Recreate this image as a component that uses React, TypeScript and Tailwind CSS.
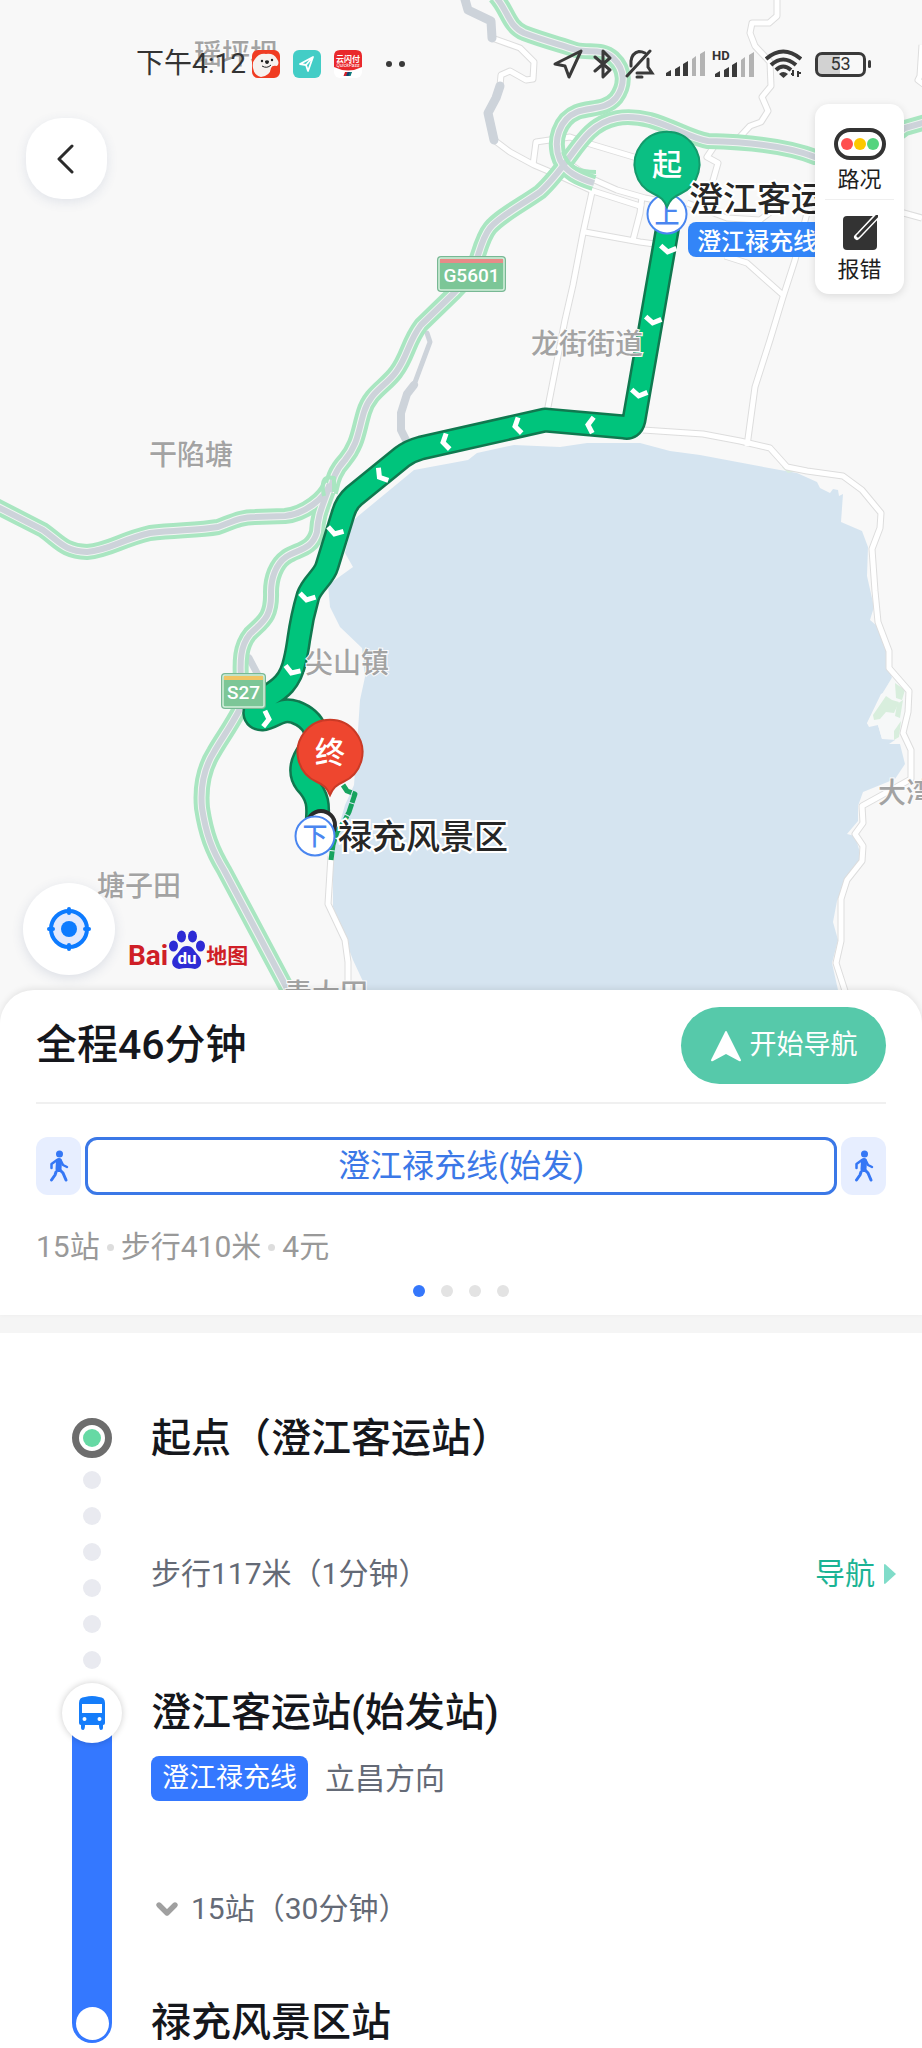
import { ChevronDown } from 'lucide-react';
import { useState } from 'react';

const highways = [
  'M495 -4 C508 10 508 26 524 33 C545 41 562 45 576 50 C590 53 602 48 613 58 C626 70 625 86 616 98 C606 110 590 107 577 112 C560 119 552 140 560 160 C566 172 578 178 594 183',
  'M940 118 L905 128 C880 148 860 154 815 157 C790 147 750 142 708 141 C690 138 672 126 650 120 C625 114 606 117 590 132 C575 146 562 172 540 192 C520 206 500 216 490 228 C480 240 478 262 470 276 L454 293 L421 325 C408 342 408 356 396 372 C386 386 370 392 364 412 C358 432 358 444 345 460 C332 474 332 486 330 492',
  'M-4 506 L43 530 C60 542 64 551 87 552 C110 550 120 540 150 533 C180 530 200 530 218 527 C232 522 240 517 255 517 L285 516 C305 514 325 498 330 484',
  'M330 484 C324 504 318 512 317 532 C312 550 298 549 286 557 C276 564 271 578 271 592 C272 618 262 622 250 634 C240 646 240 662 241 680 L241 707 C230 728 222 738 214 752 C204 768 200 786 202 808 C206 834 212 850 224 870 L290 994 L308 1028',
];

const ramps = [
  'M563 152 C568 168 580 172 596 172',
  'M324 496 C320 478 326 476 334 478 L334 492',
];

const greyRoads = [
  { d: 'M464 -4 L468 10 L491 21 L492 38', width: 9 },
  { d: 'M500 86 L496 98 L488 113 L494 140', width: 9 },
  { d: 'M427 333 L430 342 L414 385', width: 5 },
  { d: 'M414 385 L407 394 L401 413 L401 430 L408 444', width: 8 },
  { d: 'M249 658 L258 675', width: 7 },
];

const roads = [
  'M492 38 L520 48 L534 62 L533 79 L526 80 L510 71 L501 75 L500 86',
  'M494 140 L510 152 L534 165 L560 176 L593 191 L643 207',
  'M533 165 L536 142 L570 137 L587 143 L637 158',
  'M560 157 L590 178 L617 190 L645 198 L680 205',
  'M592 192 L583 233 L573 285 L565 320 L547 412',
  'M585 232 L640 242 L662 245',
  'M642 197 L640 213 L633 240',
  'M777 -4 L777 16 L769 23 L752 23 L750 33 L755 46 L770 62 L771 86 L762 97 L768 111 L761 122 L750 126 L737 140 L717 142 L707 157 L718 163 L712 184',
  'M687 203 L727 218 L760 220 L777 207',
  'M725 256 L747 263 L783 295',
  'M807 213 L795 260 L783 297 L770 340 L755 387 L747 446',
  'M900 212 L922 218',
  'M922 45 L920 76 L918 80 L926 86',
  'M643 430 L703 434 L740 441 L770 448 L787 467 L807 471 L843 476 L862 490 L881 513 L880 528 L872 549 L875 591 L878 622 L889 651 L889 668 L909 691 L908 712 L903 733 L911 750 L911 779 L862 806 L863 823 L855 834 L863 846 L862 861 L847 880 L841 899 L841 941 L836 963 L846 994 L852 1028',
  'M331 856 L328 904 L345 940 L348 962 L348 1028',
];

const lake =
  'M357 517 L414 470 L468 460 L477 453 L514 445 L560 447 L587 443 L640 443 L670 451 L700 455 L780 470 L797 473 L817 482 L820 488 L830 493 L833 489 L838 490 L839 496 L843 494 L841 522 L862 531 L868 547 L867 576 L874 607 L870 620 L877 626 L888 651 L892 679 L888 691 L881 694 L867 723 L869 727 L878 725 L882 739 L888 739 L892 731 L895 740 L889 744 L900 744 L905 764 L895 779 L863 792 L858 806 L858 821 L847 834 L855 836 L862 859 L847 878 L837 901 L833 922 L838 940 L832 963 L838 990 L844 1028 L384 1028 L367 990 L353 960 L333 907 L333 860 L335 840 L345 805 L354 785 L358 730 L360 700 L365 677 L362 648 L340 627 L330 607 L328 585 L353 567 L345 553 L352 523 Z';

const route =
  'M670 214 L634 420 Q632 429 624 427 L545 420 L421 448 Q410 451 402 457 L354 496 Q346 503 343 514 L327 566 C324 577 312 584 308 596 C298 630 300 640 295 660 C290 684 278 690 264 699 C250 710 254 719 262 719 C274 718 280 707 295 712 C316 720 322 738 310 750 C302 760 298 772 306 783 C322 800 317 812 317 827';

const arrows = [
  [668, 250, 10],
  [653, 321, 10],
  [639, 394, 10],
  [590, 425, 95],
  [517, 426, 77],
  [445, 442, 77],
  [381, 476, 52],
  [335, 532, 16],
  [307, 598, 14],
  [292, 671, 20],
  [267, 719, -84],
];

const places = [
  { name: '瑶坪坝', x: 194, y: 64 },
  { name: '龙街街道', x: 531, y: 354 },
  { name: '干陷塘', x: 149, y: 465 },
  { name: '尖山镇', x: 305, y: 673 },
  { name: '塘子田', x: 97, y: 896 },
  { name: '大湾', x: 878, y: 803 },
  { name: '青大田', x: 284, y: 1004 },
];

function Shield({ x, y, width, label, stripe }: { x: number; y: number; width: number; label: string; stripe: string }) {
  return (
    <g>
      <rect x={x} y={y} width={width} height={36} rx={4} fill="#78b894" />
      <rect x={x + 2} y={y + 2} width={width - 4} height={32} rx={2} fill="#7cc697" stroke="#d3efdc" strokeWidth={1.5} />
      <rect x={x + 3} y={y + 3} width={width - 6} height={4} fill={stripe} />
      <text x={x + width / 2} y={y + 26} textAnchor="middle" fontSize={19} fontWeight={500} fill="#fff">
        {label}
      </text>
    </g>
  );
}

function Pin({ x, y, label, fill, stroke }: { x: number; y: number; label: string; fill: string; stroke: string }) {
  return (
    <g transform={`translate(${x} ${y})`}>
      <path
        d="M0 43 C-3 36 -6 33 -13 30 A32.5 32.5 0 1 1 13 30 C6 33 3 36 0 43 Z"
        fill={fill}
        stroke={stroke}
        strokeWidth={2}
      />
      <text y={11} textAnchor="middle" fontSize={30} fontWeight={500} fill="#fff">
        {label}
      </text>
    </g>
  );
}

function StopBadge({ x, y, label }: { x: number; y: number; label: string }) {
  return (
    <g>
      <circle cx={x} cy={y} r={19.5} fill="#fff" stroke="#4a86f0" strokeWidth={2} />
      <text x={x} y={y + 9} textAnchor="middle" fontSize={25} fontWeight={500} fill="#4a86f0">
        {label}
      </text>
    </g>
  );
}

function RouteMap() {
  return (
    <svg
      viewBox="0 0 922 1024"
      preserveAspectRatio="xMidYMin slice"
      className="block h-[1024px] w-full bg-[#f8f8f8]"
      role="img"
      aria-label="路线地图"
    >
      <path d={lake} fill="#d5e4f0" />
      <path d="M867 724 L882 694 L893 676 L908 691 L904 720 L896 740 L882 739 L878 725 Z" fill="#f6f8f8" />
      <g fill="#d8eedd">
        <path d="M895 683 L905 690 L902 700 L896 698 Z" />
        <path d="M873 715 L886 696 L892 700 L899 702 L894 713 L886 712 L880 719 L874 720 Z" />
        <path d="M897 704 L903 700 L900 718 L895 716 Z" />
        <path d="M894 731 L901 721 L899 737 L894 740 Z" />
        <path d="M782 467 L797 471 L788 473 Z" />
      </g>

      <g fill="none" strokeLinejoin="round">
        {roads.map((d) => (
          <path key={d} d={d} stroke="#dddddd" strokeWidth={7} />
        ))}
        {roads.map((d) => (
          <path key={d} d={d} stroke="#ffffff" strokeWidth={5} />
        ))}
        {greyRoads.map((road) => (
          <path key={road.d} d={road.d} stroke="#cdd3da" strokeWidth={road.width} strokeLinecap="round" />
        ))}
        {highways.map((d) => (
          <path key={d} d={d} stroke="#a9e6c1" strokeWidth={16} />
        ))}
        {highways.map((d) => (
          <path key={d} d={d} stroke="#f1f5f3" strokeWidth={8} />
        ))}
        {highways.map((d) => (
          <path key={d} d={d} stroke="#cdd3da" strokeWidth={6} />
        ))}
        {ramps.map((d) => (
          <path key={d} d={d} stroke="#a9e6c1" strokeWidth={4} />
        ))}
      </g>

      <Shield x={437} y={256} width={69} label="G5601" stripe="#e88b88" />

      <g fill="none" strokeLinejoin="round">
        <path d={route} stroke="#10784f" strokeWidth={25} />
        <path d={route} stroke="#00c47c" strokeWidth={20} />
        {arrows.map(([x, y, angle]) => (
          <path
            key={`${x}-${y}`}
            d="M-8 -3 L0 2 L8 -3"
            transform={`translate(${x} ${y}) rotate(${angle})`}
            stroke="#fff"
            strokeWidth={5}
            strokeLinejoin="miter"
          />
        ))}
        <path
          d="M343 785 L347 791 L355 794 L349 812 L345 820 L337 832 L333 845 L331 860"
          stroke="#17a35e"
          strokeWidth={5}
          strokeDasharray="12 1"
        />
      </g>

      <g fontSize={28} fill="#a3a3a3" stroke="#fbfbfb" strokeWidth={2} paintOrder="stroke" fontWeight={500}>
        {places.map((place) => (
          <text key={place.name} x={place.x} y={place.y}>
            {place.name}
          </text>
        ))}
      </g>

      <Shield x={221} y={673} width={45} label="S27" stripe="#f0c565" />

      <circle cx={321} cy={825} r={14} fill="#fff" stroke="#2b2b2b" strokeWidth={4} />
      <StopBadge x={315} y={836} label="下" />
      <StopBadge x={667} y={214} label="上" />
      <Pin x={667} y={164} label="起" fill="#0bbf83" stroke="#149a6b" />
      <Pin x={330} y={752} label="终" fill="#ee462f" stroke="#c93a26" />

      <g fontSize={34} fontWeight={500} fill="#262626" stroke="#ffffff" strokeWidth={4} paintOrder="stroke">
        <text x={689} y={211}>澄江客运站</text>
        <text x={338} y={849}>禄充风景区</text>
      </g>
      <rect x={688} y={222} width={150} height={35} rx={8} fill="#3385f8" />
      <text x={697} y={250} fontSize={24} fontWeight={500} fill="#fff">
        澄江禄充线
      </text>
    </svg>
  );
}

function Signal() {
  return (
    <svg viewBox="0 0 39 26" className="h-[26px] w-[39px]" aria-hidden="true">
      <path d="M0 25 V22 L5 19 V25 Z M9 25 V18 L14 15 V25 Z M17 25 V13 L22 10 V25 Z" fill="#3a3a3a" />
      <path d="M26 25 V8 L30 5 V25 Z M34 25 V3 L39 0 V25 Z" fill="#b3b3b3" />
    </svg>
  );
}

function StatusBar() {
  return (
    <div className="absolute inset-x-0 top-0 flex h-[128px] items-center justify-between pr-[51px] pl-[136px] text-[#333]">
      <div className="flex items-center gap-[14px]">
        <span className="text-[28px] leading-8">下午4:12</span>
        <div className="-ml-2 flex items-center gap-[13px]">
          <svg viewBox="0 0 28 28" className="h-7 w-7" aria-hidden="true">
            <rect width="28" height="28" rx="6" fill="#f03c22" />
            <path d="M3 9 Q7 3 14 4 Q22 3 25 9 Q28 13 25 16 Q20 15 19 18 Q18 26 9 27 Q2 25 1 18 Q0 12 3 9 Z" fill="#f6f1ee" />
            <path d="M13 11 q2 -1.500 4 0 q0 3 -2 3 q-2 0 -2 -3" fill="#222" />
            <circle cx="10" cy="11" r="1.200" fill="#222" />
            <circle cx="20" cy="10" r="1.200" fill="#222" />
            <path d="M10 16 Q15 19 19 15" fill="none" stroke="#222" />
          </svg>
          <svg viewBox="0 0 28 28" className="h-7 w-7" aria-hidden="true">
            <rect width="28" height="28" rx="6" fill="#43cdc6" />
            <path d="M7 14 L20 7 L15 21 L13 15 Z M13 15 L20 7" fill="none" stroke="#fff" strokeWidth="1.800" strokeLinejoin="round" />
          </svg>
          <svg viewBox="0 0 28 28" className="h-7 w-7" aria-hidden="true">
            <rect width="28" height="28" rx="6" fill="#fff" />
            <path d="M6 0 H22 Q28 0 28 6 V17 Q14 24 0 17 V6 Q0 0 6 0" fill="#e9292c" />
            <text x="14" y="12" textAnchor="middle" fontSize="8" fontWeight="700" fill="#fff">云闪付</text>
            <text x="14" y="17" textAnchor="middle" fontSize="5" fontStyle="italic" fill="#fff">QuickPass</text>
            <path d="M11 22 h3 l-1.500 4 h-3 Z" fill="#d3222a" />
            <path d="M13.500 22 h4 l-1.500 4 h-4 Z" fill="#14406e" />
            <path d="M16 22 h2 l-1.500 4 h-2 Z" fill="#0f7c7c" />
          </svg>
        </div>
        <div className="ml-[10px] flex gap-[7px]">
          <span className="h-[6px] w-[6px] rounded-full bg-[#3a3a3a]" />
          <span className="h-[6px] w-[6px] rounded-full bg-[#3a3a3a]" />
        </div>
      </div>

      <div className="flex items-center">
        <svg viewBox="0 0 30 30" className="h-[30px] w-[30px]" fill="none" stroke="#3a3a3a" strokeWidth="3" strokeLinejoin="round" aria-hidden="true">
          <path d="M2 15 L28 2 L16 28 L12 17 Z" />
        </svg>
        <svg viewBox="0 0 20 30" className="ml-[10px] h-[30px] w-5" fill="none" stroke="#3a3a3a" strokeWidth="3" strokeLinejoin="round" strokeLinecap="round" aria-hidden="true">
          <path d="M2 8 L17 21 L10 28 V2 L17 9 L2 22" />
        </svg>
        <svg viewBox="0 0 30 30" className="ml-3 h-[30px] w-[30px]" fill="none" stroke="#3a3a3a" strokeWidth="3" strokeLinecap="round" aria-hidden="true">
          <path d="M2 27 L25 2" />
          <path d="M6 17 V12 Q7 4 14 2.500 Q17 2.500 20 4" />
          <path d="M23 10 V18 L27 24 H12" />
          <path d="M12 28 H17" />
        </svg>
        <div className="ml-[11px] flex items-center">
          <Signal />
        </div>
        <div className="ml-[10px] flex flex-col items-start">
          <span className="-ml-[3px] -mb-[9px] h-[11px] text-[13px] leading-[11px] font-bold">HD</span>
          <Signal />
        </div>
        <svg viewBox="0 0 37 30" className="ml-[11px] h-[30px] w-[37px]" fill="none" stroke="#3a3a3a" strokeWidth="4" aria-hidden="true">
          <path d="M1 10 Q18 -5 36 10" />
          <path d="M6 16 Q18 5 31 16" />
          <path d="M11 21 Q18 14 26 21" />
          <path d="M14 25 Q18 21 23 25 L18.500 29 Z" fill="#3a3a3a" stroke="none" />
          <path d="M28 21 V27 M33 22 V28" strokeWidth="2" />
          <path d="M26 25 H29 M32 24 H36" strokeWidth="2" />
        </svg>
        <div className="ml-[13px] flex items-center gap-[2px]">
          <div className="flex h-[25px] w-[51px] items-center justify-center rounded-[7px] border-[3px] border-[#3a3a3a] bg-linear-to-r from-[#d2d2d2] from-50% to-[#f8f8f8] to-50% text-[18px] leading-5">
            53
          </div>
          <span className="h-2 w-[3px] rounded-sm bg-[#3a3a3a]" />
        </div>
      </div>
    </div>
  );
}

function BaiduLogo() {
  return (
    <div className="absolute bottom-[54px] left-[128px] flex items-end font-bold text-[#cf1f27]">
      <span className="text-[28px] leading-7">Bai</span>
      <svg viewBox="0 0 38 40" className="h-10 w-[38px]" aria-hidden="true">
        <g fill="#2d2bd5">
          <ellipse cx="5.500" cy="16" rx="4.500" ry="5.500" />
          <ellipse cx="13.500" cy="6.500" rx="4.500" ry="6" />
          <ellipse cx="24.500" cy="6.500" rx="4.500" ry="6" />
          <ellipse cx="32.500" cy="16" rx="4.500" ry="5.500" />
          <path d="M19 16 C25 16 26 21 30 25 C35 30 34 38 27 39 Q19 37 11 39 C3 38 2 30 8 25 C12 21 13 16 19 16 Z" />
        </g>
        <text x="19" y="34" textAnchor="middle" fontSize="17" fontWeight="700" fill="#fff">du</text>
      </svg>
      <span className="text-[21px] leading-7">地图</span>
    </div>
  );
}

function MapTools() {
  return (
    <div className="absolute top-[104px] right-[18px] flex h-[190px] w-[89px] flex-col items-center rounded-[14px] bg-white text-[22px] text-[#1e1e1e] shadow-[0_2px_8px_rgba(0,0,0,0.12)]">
      <button type="button" className="flex w-full flex-col items-center pt-6">
        <svg viewBox="0 0 52 32" className="h-8 w-[52px]" aria-hidden="true">
          <rect x="2" y="2" width="48" height="28" rx="14" fill="#fff" stroke="#333" strokeWidth="4" />
          <circle cx="13" cy="16" r="6" fill="#ff4f4f" />
          <circle cx="26" cy="16" r="6" fill="#fdc800" />
          <circle cx="39" cy="16" r="6" fill="#55d47f" />
        </svg>
        <span className="mt-1 leading-8">路况</span>
      </button>
      <span className="mt-[3px] h-px w-[69px] bg-[#efefef]" />
      <button type="button" className="flex w-full flex-col items-center pt-[15px]">
        <svg viewBox="0 0 36 36" className="h-9 w-9" aria-hidden="true">
          <rect x="1" y="1" width="34" height="34" rx="4" fill="#333" />
          <path d="M34 2 L18 19 L15 22" fill="none" stroke="#fff" strokeWidth="6" strokeLinecap="round" />
          <path d="M36 0 L18 19 L16 21" fill="none" stroke="#333" strokeWidth="3" strokeLinecap="round" />
        </svg>
        <span className="mt-[3px] leading-8">报错</span>
      </button>
    </div>
  );
}

function WalkTile() {
  return (
    <span className="flex w-[45px] shrink-0 items-center justify-center rounded-[12px] bg-[#e7eeff]">
      <svg viewBox="0 0 20 32" className="h-8 w-5" fill="none" stroke="#3577f5" strokeLinecap="round" strokeLinejoin="round" aria-label="步行">
        <circle cx="10.500" cy="4" r="3.500" fill="#3577f5" stroke="none" />
        <path d="M10 11 L9.500 19" strokeWidth="6" />
        <path d="M8 10 L2.500 14 V18" strokeWidth="2.500" />
        <path d="M12 11 L14 15 L18 17" strokeWidth="2.500" />
        <path d="M10 19 L14 23 L17 30" strokeWidth="3" />
        <path d="M7 22 L6 25 L2.500 30" strokeWidth="3" />
      </svg>
    </span>
  );
}

function Summary() {
  const [page, setPage] = useState(0);

  return (
    <section className="relative -mt-[34px] rounded-t-[34px] bg-white px-9 shadow-[0_-2px_6px_rgba(0,0,0,0.08)]">
      <div className="flex items-center justify-between border-b-2 border-[#f0f0f0] pt-[17px] pb-[18px]">
        <h1 className="text-[41px] leading-[77px] font-medium text-[#15171c]">全程46分钟</h1>
        <button
          type="button"
          className="flex h-[77px] w-[205px] items-center justify-center gap-2 rounded-full bg-[#56c9aa] text-[27px] text-white"
        >
          <svg viewBox="0 0 32 32" className="h-8 w-8" fill="#fff" aria-hidden="true">
            <path d="M16 1 Q17 1 17.500 3 L31 30 Q31 32 29 31 L16 24 L3 31 Q1 32 1 30 L14.500 3 Q15 1 16 1 Z" />
          </svg>
          开始导航
        </button>
      </div>

      <div className="mt-[33px] flex h-[58px] gap-1">
        <WalkTile />
        <div className="flex flex-1 items-center justify-center rounded-[12px] border-[3px] border-[#3b78e7] text-[32px] text-[#3b78e7]">
          澄江禄充线(始发)
        </div>
        <WalkTile />
      </div>

      <p className="mt-9 flex items-center gap-[7px] text-[30px] leading-8 text-[#999]">
        <span>15站</span>
        <span className="h-[7px] w-[7px] rounded-full bg-[#ddd]" />
        <span>步行410米</span>
        <span className="h-[7px] w-[7px] rounded-full bg-[#ddd]" />
        <span>4元</span>
      </p>

      <div className="mt-[22px] flex justify-center gap-4 pb-[18px]">
        {[0, 1, 2, 3].map((i) => (
          <button
            key={i}
            type="button"
            aria-label={`方案${i + 1}`}
            onClick={() => setPage(i)}
            className={`h-3 w-3 rounded-full ${page === i ? 'bg-[#3577fb]' : 'bg-[#e3e3e3]'}`}
          />
        ))}
      </div>
    </section>
  );
}

function Timeline() {
  return (
    <ol className="pt-[85px] pl-[62px] text-[40px] font-medium text-[#15171c]">
      <li className="flex gap-[29px]">
        <div className="flex w-[60px] shrink-0 flex-col items-center gap-[18px] pb-[14px]">
          <span className="-mb-[5px] flex h-10 w-10 items-center justify-center rounded-full border-[7px] border-[#6d6d6d]">
            <span className="h-[18px] w-[18px] rounded-full bg-[#66d9a4]" />
          </span>
          {[0, 1, 2, 3, 4, 5].map((i) => (
            <span key={i} className="h-[18px] w-[18px] rounded-full bg-[#e9eaf0]" />
          ))}
        </div>
        <div className="flex-1 pr-[26px]">
          <h2 className="leading-[42px]">起点（澄江客运站）</h2>
          <div className="mt-[98px] flex items-center justify-between text-[30px] leading-8 font-normal">
            <span className="text-[#646a76]">步行117米（1分钟）</span>
            <a href="#walk" className="flex items-center gap-[9px] text-[#1bb394]">
              导航
              <svg viewBox="0 0 12 20" className="h-5 w-3" fill="#80dcc9" aria-hidden="true">
                <path d="M0 1 Q0 0 1 0 L12 10 L1 20 Q0 20 0 19 Z" />
              </svg>
            </a>
          </div>
        </div>
      </li>

      <li className="flex gap-[29px]">
        <div className="flex w-[60px] shrink-0 flex-col items-center">
          <span className="z-10 flex h-[60px] w-[60px] items-center justify-center rounded-full bg-white shadow-[0_0_7px_rgba(0,0,0,0.2)]">
            <svg viewBox="0 0 26 34" className="h-[34px] w-[26px]" fill="#157dfa" aria-label="公交">
              <path
                fillRule="evenodd"
                d="M0 7 Q0 1 6 1 Q13 -1 20 1 Q26 1 26 7 V27 Q26 29 24 29 V32 Q24 34 22 34 Q20 34 20 29 H6 Q6 34 4 34 Q2 34 2 32 V29 Q0 29 0 27 Z M3 8 V17 H23 V8 Z M3.500 23 a2 2 0 1 0 4 0 a2 2 0 1 0 -4 0 Z M18.500 23 a2 2 0 1 0 4 0 a2 2 0 1 0 -4 0 Z"
              />
            </svg>
          </span>
          <span className="-mt-2 w-10 flex-1 bg-[#3478ff]" />
        </div>
        <div className="flex-1 pb-[78px]">
          <h2 className="leading-[60px]">澄江客运站(始发站)</h2>
          <div className="mt-[13px] flex items-center gap-[17px] font-normal">
            <span className="flex h-[45px] items-center rounded-[8px] bg-[#3478ff] px-[11px] text-[27px] text-white">
              澄江禄充线
            </span>
            <span className="text-[30px] leading-8 text-[#646a76]">立昌方向</span>
          </div>
          <button type="button" className="mt-[92px] flex items-center gap-2 text-[30px] leading-8 font-normal text-[#646a76]">
            <ChevronDown className="h-8 w-8 text-[#a0a0a0]" strokeWidth={4} />
            15站（30分钟）
          </button>
        </div>
      </li>

      <li className="flex gap-[29px] pb-[5px]">
        <div className="flex w-[60px] shrink-0 justify-center">
          <span className="flex h-10 w-10 items-center justify-center rounded-b-full bg-[#3478ff]">
            <span className="h-[33px] w-[33px] rounded-full bg-white" />
          </span>
        </div>
        <h2 className="flex-1 leading-10">禄充风景区站</h2>
      </li>
    </ol>
  );
}

export default function App() {
  return (
    <main className="min-h-screen overflow-hidden bg-white font-[Roboto,'Noto_Sans_CJK_SC',sans-serif]">
      <div className="relative">
        <RouteMap />
        <StatusBar />
        <button
          type="button"
          aria-label="返回"
          className="absolute top-[118px] left-[26px] flex h-[81px] w-[81px] items-center justify-center rounded-[36px] bg-white shadow-[0_3px_12px_rgba(60,80,130,0.12)]"
        >
          <svg viewBox="0 0 20 32" className="h-8 w-5" fill="none" stroke="#2b2b2b" strokeWidth="3" strokeLinecap="round" strokeLinejoin="round" aria-hidden="true">
            <path d="M15 3 L2 16 L15 29" />
          </svg>
        </button>
        <MapTools />
        <button
          type="button"
          aria-label="定位"
          className="absolute bottom-[49px] left-[23px] flex h-[92px] w-[92px] items-center justify-center rounded-full bg-white shadow-[0_3px_12px_rgba(60,80,130,0.15)]"
        >
          <svg viewBox="0 0 46 46" className="h-[46px] w-[46px]" fill="none" stroke="#0d7bff" strokeWidth="4" strokeLinecap="round" aria-hidden="true">
            <circle cx="23" cy="23" r="18" fill="#e2e9fd" />
            <circle cx="23" cy="23" r="8" fill="#0d7bff" stroke="none" />
            <path d="M23 3 V7 M23 39 V43 M3 23 H7 M39 23 H43" />
          </svg>
        </button>
        <BaiduLogo />
      </div>
      <Summary />
      <div className="h-[18px] bg-[#f5f5f5]" />
      <Timeline />
    </main>
  );
}
